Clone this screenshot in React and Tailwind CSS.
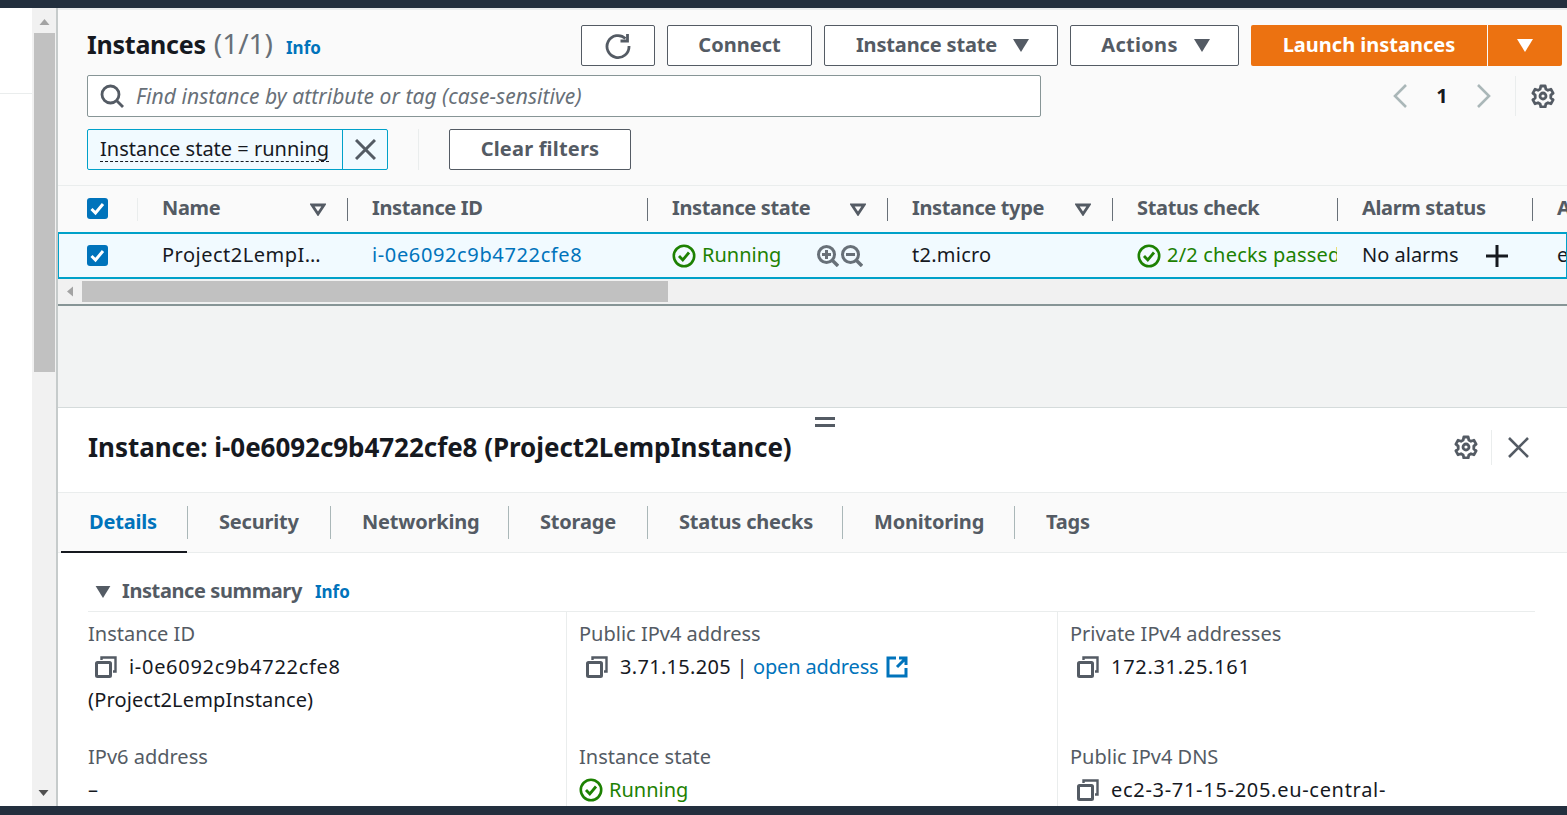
import React from "react";

const Caret = ({ className = "w-[16px] h-[13px]", color = "#545b64" }) => (
  <svg viewBox="0 0 16 13" className={className}><path d="M0 0h16L8 13z" fill={color} /></svg>
);
const FilterCaret = () => (
  <svg viewBox="0 0 16 13" className="w-[16px] h-[13px]"><path d="M2 2h12L8 11z" fill="none" stroke="#545b64" strokeWidth="2.800" /></svg>
);
const Gear = ({ className = "w-[24px] h-[24px]" }) => (
  <svg viewBox="0 0 24 24" className={className} fill="none" stroke="#545b64" strokeWidth="2.800" strokeLinejoin="round">
    <path d="M9.800 2h4.400l.6 3 2.200 1.300 2.900-1 2.200 3.800-2.300 2v2.800l2.300 2-2.200 3.800-2.900-1-2.200 1.300-.6 3H9.800l-.6-3L7 18.700l-2.900 1-2.200-3.800 2.300-2v-2.800l-2.300-2 2.200-3.800 2.900 1L9.200 5z" />
    <circle cx="12" cy="12" r="3" />
  </svg>
);
const XIcon = ({ className = "w-[21px] h-[21px]", sw = 3 }) => (
  <svg viewBox="0 0 21 21" className={className} fill="none" stroke="#545b64" strokeWidth={sw}><path d="M1 1l19 19M20 1L1 20" /></svg>
);
const Copy = () => (
  <svg viewBox="0 0 22 22" className="w-[22px] h-[22px] shrink-0" fill="none" stroke="#545b64">
    <rect x="1.500" y="6.500" width="14" height="14" rx="1" strokeWidth="3" />
    <path d="M6.500 4V1.500h14v14H18" strokeWidth="2.400" />
  </svg>
);
const Check = ({ className = "w-[24px] h-[24px]" }) => (
  <svg viewBox="0 0 24 24" className={`shrink-0 ${className}`} fill="none" stroke="#1d8102" strokeWidth="2.600">
    <circle cx="12" cy="12" r="10.200" />
    <path d="M7 12l3.800 4L17 8.500" strokeWidth="2.800" />
  </svg>
);
const Box = () => (
  <span className="w-[21px] h-[21px] rounded-[3px] bg-[#0073bb] flex items-center justify-center">
    <svg viewBox="0 0 21 21" className="w-[21px] h-[21px]" fill="none" stroke="#fff" strokeWidth="3"><path d="M4.500 11l4 4L16 6" /></svg>
  </span>
);
const Zoom = ({ plus }) => (
  <svg viewBox="0 0 22 22" className="w-[22px] h-[22px]" fill="none" stroke="#687078" strokeWidth="3">
    <circle cx="9.500" cy="9.500" r="8" />
    <path d="M15 15l6 6" strokeWidth="3.400" />
    <path d={plus ? "M5 9.500h9M9.500 5v9" : "M5 9.500h9"} />
  </svg>
);

const Btn = ({ w, children }) => (
  <button className={`${w} h-[41px] shrink-0 bg-white border border-[#545b64] rounded-[2px] flex items-center justify-center gap-[16px] font-bold text-[#545b64] text-[20px] pb-[2px]`}>
    {children}
  </button>
);

const heads = [
  ["w-[210px]", "Name", true],
  ["w-[300px]", "Instance ID", false],
  ["w-[240px]", "Instance state", true],
  ["w-[225px]", "Instance type", true],
  ["w-[225px]", "Status check", false],
  ["w-[195px]", "Alarm status", false],
];

const Label = ({ children }) => <div className="text-[#545b64]">{children}</div>;

export default function App() {
  return (
    <div className="w-[1567px] h-[815px] flex flex-col overflow-hidden bg-white text-[#16191f] text-[20px] leading-[33px] font-['Noto_Sans',sans-serif]">
      <div className="h-[8px] shrink-0 bg-[#232f3e]" />
      <div className="flex-1 min-h-0 flex">
        <div className="w-[32px] shrink-0 bg-white">
          <div className="h-[86px] border-b border-[#eaeded]" />
        </div>
        <div className="w-[26px] shrink-0 bg-[#f1f1f1] border-r-2 border-[#c6cbcb] flex flex-col items-center relative">
          <div className="h-[25px] w-full flex items-center justify-center pt-[2px]">
            <svg viewBox="0 0 10 6" className="w-[11px] h-[6px]"><path d="M0 6h10L5 0z" fill="#a3a3a3" /></svg>
          </div>
          <div className="w-[21px] h-[339px] bg-[#c1c1c1]" />
          <svg viewBox="0 0 10 6" className="w-[11px] h-[6px] absolute bottom-[10px] left-[6px]"><path d="M0 0h10L5 6z" fill="#505050" /></svg>
        </div>
        <main className="flex-1 min-w-0 flex flex-col">
          <section className="h-[298px] shrink-0 flex flex-col bg-[#fafafa] border-t-2 border-[#e9ebed] border-b-2 border-b-[#879596]">
            <div className="pl-[29px] pr-[5px] pt-[15px]">
              <div className="flex items-center justify-between h-[41px]">
                <div className="flex items-baseline">
                  <span className="text-[25px] font-bold tracking-[-0.25px]">Instances</span>
                  <span className="text-[28px] text-[#687078] ml-[8px]">(1/1)</span>
                  <span className="text-[17px] font-bold text-[#0073bb] ml-[13px]">Info</span>
                </div>
                <div className="flex gap-[12px]">
                  <Btn w="w-[74px]">
                    <svg viewBox="0 0 26 26" className="w-[26px] h-[26px] mt-[2px]" fill="none" stroke="#545b64" strokeWidth="2.800">
                      <path d="M20.500 5.500A11 11 0 1 0 24 13" />
                      <path d="M22.500 1v7h-7" />
                    </svg>
                  </Btn>
                  <Btn w="w-[145px]">Connect</Btn>
                  <Btn w="w-[234px]"><span className="ml-[3px] tracking-[-0.15px]">Instance state</span><Caret className="w-[16px] h-[13px] mt-[2px]" /></Btn>
                  <Btn w="w-[169px]"><span className="ml-[2px] tracking-[0.3px]">Actions</span><Caret className="w-[16px] h-[13px] mt-[2px]" /></Btn>
                  <div className="flex gap-px">
                    <button className="w-[236px] h-[41px] bg-[#ec7211] rounded-l-[2px] text-white font-bold pb-[2px]">Launch instances</button>
                    <button className="w-[74px] h-[41px] bg-[#ec7211] rounded-r-[2px] flex items-center justify-center"><Caret color="#fff" /></button>
                  </div>
                </div>
              </div>
              <div className="flex items-center mt-[9px] h-[42px]">
                <div className="w-[954px] h-[42px] bg-white border border-[#879596] rounded-[2px] flex items-center pl-[12px] gap-[12px]">
                  <svg viewBox="0 0 24 24" className="w-[24px] h-[24px]" fill="none" stroke="#545b64" strokeWidth="2.800">
                    <circle cx="10.500" cy="10.500" r="8.500" /><path d="M16.500 16.500l6.500 6.500" />
                  </svg>
                  <span className="italic text-[#687078] text-[21px] tracking-[0.05px]">Find instance by attribute or tag (case-sensitive)</span>
                </div>
                <div className="ml-auto flex items-center h-[42px]">
                  <svg viewBox="0 0 14 24" className="w-[14px] h-[24px]" fill="none" stroke="#aab7b8" strokeWidth="2.600"><path d="M13 1L2 12l11 11" /></svg>
                  <span className="w-[70px] text-center font-bold pb-[2px]">1</span>
                  <svg viewBox="0 0 14 24" className="w-[14px] h-[24px]" fill="none" stroke="#aab7b8" strokeWidth="2.600"><path d="M1 1l11 11L1 23" /></svg>
                  <div className="w-px h-[40px] bg-[#eaeded] ml-[24px]" />
                  <Gear className="w-[24px] h-[24px] ml-[15px] mr-[7px]" />
                </div>
              </div>
              <div className="flex items-center mt-[12px] h-[41px]">
                <div className="w-[301px] h-[41px] flex bg-[#f1faff] border border-[#00a1c9] rounded-[2px]">
                  <div className="w-[255px] flex items-center pl-[12px] border-r border-[#00a1c9]">
                    <span className="border-b border-dashed border-[#16191f] leading-[25px] whitespace-nowrap mb-[1px]">Instance state = running</span>
                  </div>
                  <div className="flex-1 flex items-center justify-center"><XIcon /></div>
                </div>
                <div className="w-px h-[41px] bg-[#eaeded] ml-[30px]" />
                <div className="ml-[30px]"><Btn w="w-[182px]"><span className="tracking-[0.2px]">Clear filters</span></Btn></div>
              </div>
            </div>
            <div className="mt-[15px] border-t border-[#eaeded] h-[47px] shrink-0 flex items-center overflow-hidden">
              <div className="w-[80px] shrink-0 pl-[29px] flex items-center h-[23px] border-r border-[#eaeded]"><span className="mb-[1px]"><Box /></span></div>
              {heads.map(([w, t, f]) => (
                <div key={t} className={`${w} shrink-0 h-[23px] flex items-center justify-between pl-[24px] pr-[21px] border-r border-[#687078] font-bold text-[#545b64] whitespace-nowrap tracking-[-0.35px]`}>
                  <span className="pb-[3px]">{t}</span>{f && <FilterCaret />}
                </div>
              ))}
              <div className="pl-[24px] font-bold text-[#545b64] pb-[3px]">AMI</div>
            </div>
            <div className="h-[47px] shrink-0 bg-[#f1faff] border-y-2 border-x border-[#00a1c9] flex items-center overflow-hidden whitespace-nowrap">
              <div className="w-[78px] shrink-0 pl-[28px] flex items-center"><Box /></div>
              <div className="w-[210px] shrink-0 pl-[25px] tracking-[0.5px] pb-[2px]">Project2LempI…</div>
              <div className="w-[300px] shrink-0 pl-[25px] text-[#0073bb] tracking-[0.63px] pb-[2px]">i-0e6092c9b4722cfe8</div>
              <div className="w-[240px] shrink-0 pl-[25px] flex items-center text-[#1d8102] gap-[6px]">
                <Check /> <span className="pb-[2px]">Running</span>
                <span className="flex gap-[2px] ml-[30px]"><Zoom plus /><Zoom /></span>
              </div>
              <div className="w-[225px] shrink-0 pl-[25px] tracking-[0.25px] pb-[2px]">t2.micro</div>
              <div className="w-[225px] shrink-0 pl-[25px] flex items-center text-[#1d8102] gap-[6px] overflow-hidden"><Check /> <span className="pb-[2px] tracking-[0.2px]">2/2 checks passed</span></div>
              <div className="w-[195px] shrink-0 pl-[25px] flex items-center">
                <span className="pb-[2px]">No alarms</span>
                <svg viewBox="0 0 22 22" className="w-[22px] h-[22px] ml-[27px]" fill="none" stroke="#16191f" strokeWidth="3"><path d="M11 0v22M0 11h22" /></svg>
              </div>
              <div className="pl-[25px] pb-[2px]">e</div>
            </div>
            <div className="flex-1 bg-[#f1f1f1] flex items-stretch pt-[2px] pb-[2px]">
              <div className="w-[24px] flex items-center justify-center">
                <svg viewBox="0 0 6 10" className="w-[6px] h-[11px]"><path d="M6 0v10L0 5z" fill="#a3a3a3" /></svg>
              </div>
              <div className="w-[586px] bg-[#c1c1c1]" />
            </div>
          </section>
          <div className="h-[101px] shrink-0 bg-[#f2f3f3]" />
          <section className="flex-1 min-h-0 relative bg-white border-t border-[#d5dbdb] overflow-hidden">
            <div className="absolute left-[757px] top-[9px] w-[20px] h-[10px] border-y-[3px] border-[#545b64]" />
            <div className="h-[85px] flex items-center pl-[30px] pr-[38px] pb-[6px] border-b border-[#eaeded]">
              <h2 className="text-[26px] font-bold whitespace-nowrap tracking-[-0.05px]">Instance: i-0e6092c9b4722cfe8 (Project2LempInstance)</h2>
              <div className="ml-auto flex items-center">
                <Gear />
                <div className="w-px h-[35px] bg-[#eaeded] ml-[13px] mr-[16px]" />
                <XIcon sw={2.6} />
              </div>
            </div>
            <div className="h-[60px] bg-[#fafafa] border-b border-[#eaeded] flex items-center pl-[3px] font-bold text-[#545b64] tracking-[-0.2px]">
              <div className="w-[126px] h-full flex items-center pl-[28px] text-[#0073bb] border-b-2 border-[#16191f] mb-[-1px]"><span className="pb-[2px]">Details</span></div>
              {[
                ["w-[144px]", "Security"],
                ["w-[178px]", "Networking"],
                ["w-[139px]", "Storage"],
                ["w-[195px]", "Status checks"],
                ["w-[172px]", "Monitoring"],
                ["w-[120px]", "Tags"],
              ].map(([w, t], i) => (
                <div key={t} className={`${w} h-[33px] flex items-center pl-[31px] whitespace-nowrap pb-[2px] ${i === 0 ? "border-l border-[#aab7b8]" : ""} ${i < 5 ? "border-r border-[#aab7b8]" : ""}`}>{t}</div>
              ))}
            </div>
            <div className="pl-[30px] pr-[32px]">
              <div className="h-[59px] flex items-center pt-[19px] border-b border-[#eaeded]">
                <Caret className="w-[16px] h-[12px] ml-[7px] mr-[11px]" />
                <span className="font-bold text-[#545b64] tracking-[-0.4px] pb-[3px]">Instance summary</span>
                <span className="text-[17px] font-bold text-[#0073bb] ml-[13px]">Info</span>
              </div>
              <div className="grid grid-cols-[478px_491px_1fr] h-[200px]">
                {[
                  [
                    ["Instance ID", <><div className="flex items-center gap-[12px] pl-[7px]"><Copy /><span className="tracking-[0.7px]">i-0e6092c9b4722cfe8</span></div><div className="tracking-[0.15px]">(Project2LempInstance)</div></>],
                    ["IPv6 address", <div>–</div>],
                  ],
                  [
                    ["Public IPv4 address", <div className="flex items-center gap-[12px] pl-[7px] whitespace-nowrap"><Copy /><span><span className="tracking-[0.3px]">3.71.15.205 |</span> <span className="text-[#0073bb] tracking-[-0.15px]">open address</span></span>
                      <svg viewBox="0 0 22 22" className="w-[22px] h-[22px] ml-[-5px]" fill="none" stroke="#0073bb" strokeWidth="3"><path d="M10 2H2v18h18v-8M13 2h7v7M20 2l-9 9" /></svg></div>],
                    ["Instance state", <div className="flex items-center gap-[6px] text-[#1d8102]"><Check /> Running</div>],
                  ],
                  [
                    ["Private IPv4 addresses", <div className="flex items-center gap-[12px] pl-[7px]"><Copy /><span className="tracking-[0.7px]">172.31.25.161</span></div>],
                    ["Public IPv4 DNS", <div className="flex items-center gap-[12px] pl-[7px] whitespace-nowrap"><Copy /><span className="tracking-[0.7px]">ec2-3-71-15-205.eu-central-</span></div>],
                  ],
                ].map((col, i) => (
                  <div key={i} className={`pt-[5px] ${i > 0 ? "border-l border-[#eaeded] pl-[12px]" : ""}`}>
                    <div className="h-[123px]"><Label>{col[0][0]}</Label>{col[0][1]}</div>
                    <div><Label>{col[1][0]}</Label>{col[1][1]}</div>
                  </div>
                ))}
              </div>
            </div>
          </section>
        </main>
      </div>
      <div className="h-[9px] shrink-0 bg-[#232f3e]" />
    </div>
  );
}
